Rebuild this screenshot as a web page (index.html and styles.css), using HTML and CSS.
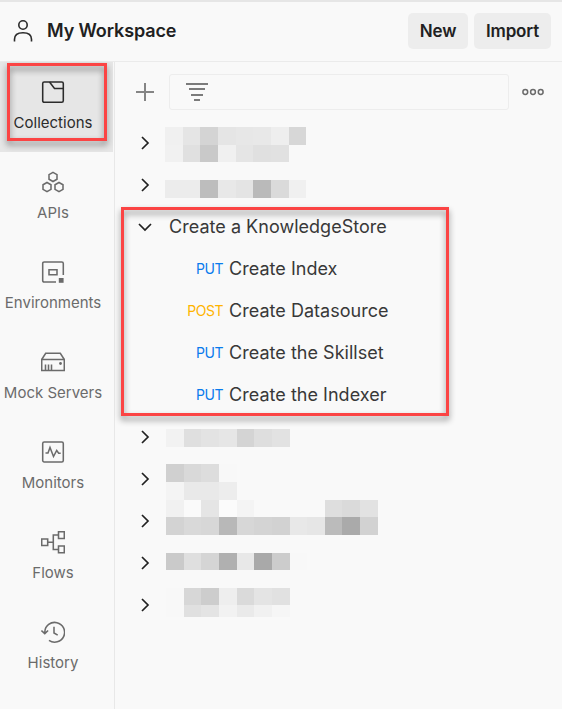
FILE: index.html
```html
<!DOCTYPE html>
<html lang="en">
<head>
<meta charset="utf-8">
<title>My Workspace</title>
<link rel="stylesheet" href="styles.css">
</head>
<body>
<div class="app">
  <header class="header">
    <svg class="user" width="20" height="24" viewBox="0 0 20 24"><circle cx="10" cy="6" r="4.2"/><path d="M1.500 22.500v-2.200c0-4 2.800-6.600 8.500-6.600s8.500 2.600 8.500 6.600v2.200"/></svg>
    <h1 class="title">My Workspace</h1>
    <button class="btn btn-new">New</button>
    <button class="btn btn-import">Import</button>
  </header>
  <div class="body">
    <nav class="sidebar">
      <a class="item active"><svg class="icon" viewBox="0 0 24 24"><rect x="1.700" y="2" width="20.600" height="20.300" rx="1.500"/><path d="M8.500 2l5 6.500h8.800"/></svg><span>Collections</span></a>
      <a class="item"><svg class="icon" viewBox="0 0 24 24"><path d="M12 2.300l4 2.300v4.600l-4 2.300-4-2.300V4.600zM6 12.500l4 2.300v4.600l-4 2.300-4-2.300v-4.600zM18 12.500l4 2.300v4.600l-4 2.300-4-2.300v-4.600z"/></svg><span>APIs</span></a>
      <a class="item"><svg class="icon" viewBox="0 0 24 24"><path d="M15 22H3.200Q1.700 22 1.700 20.500V3.500Q1.700 2 3.200 2h17.600q1.500 0 1.500 1.500V15"/><path d="M8 9.800h8v5H8z"/><path class="fill" d="M17.800 18h4.800v4.800h-4.800z"/></svg><span>Environments</span></a>
      <a class="item"><svg class="icon" viewBox="0 0 24 24"><path d="M.7 9.500h22.600v11H.7zM.7 9.500l4-6.200h14.600l4 6.200M4.500 14.500v6M7.500 14.500v6M10.500 14.500v6"/><circle class="fill" cx="19.500" cy="13.500" r="1.400"/></svg><span>Mock Servers</span></a>
      <a class="item"><svg class="icon" viewBox="0 0 24 24"><rect x="1.700" y="2" width="20.600" height="20" rx="1.500"/><path d="M4.500 13H7l2-5.500 3.500 9 3.200-6 2 2.700h2"/></svg><span>Monitors</span></a>
      <a class="item"><svg class="icon" viewBox="0 0 24 24"><path d="M.7 9h6v6.500h-6zM17.500 1.700h5.800v6.800h-5.800zM17.500 16h5.800v6.800h-5.800zM6.700 12.300h5.600M17.500 5h-5.200v14.500h5.200"/></svg><span>Flows</span></a>
      <a class="item"><svg class="icon" viewBox="0 0 24 24"><path d="M3.800 13.300V12A9.900 9.900 0 1 1 8 20.400M.4 10.500l3.400 3.100 3.300-3.100M13 6.800v6.200l3.700 2.200"/></svg><span>History</span></a>
      <div class="callout callout-nav"></div>
    </nav>
    <main class="main">
      <div class="toolbar">
        <svg class="plus" width="18" height="18" viewBox="0 0 18 18"><path d="M0 9h18M9 0v18"/></svg>
        <div class="filter"><svg width="22" height="20" viewBox="0 0 22 20"><path d="M0 2h22M3 7h16M5 13h12M8 18h6"/></svg></div>
        <svg class="more" width="22" height="8" viewBox="0 0 22 8"><circle cx="3.300" cy="4" r="2.400"/><circle cx="11" cy="4" r="2.400"/><circle cx="18.700" cy="4" r="2.400"/></svg>
      </div>
      <div class="tree" id="tree"></div>
      <div class="callout callout-tree"></div>
    </main>
  </div>
</div>
<script src="tree.js"></script>
</body>
</html>
```
FILE: styles.css
```css
* { box-sizing: border-box; }
body { margin: 0; background: #f9f9f9; color: #212121; font-family: Inter, "Liberation Sans", sans-serif; }
svg { display: block; flex: none; fill: none; }
.app { width: 562px; height: 709px; display: flex; flex-direction: column; overflow: hidden; }
.header { height: 62px; display: flex; align-items: center; padding: 0 11px 1px 13px; border-top: 2px solid #e6e6e6; border-bottom: 1px solid #ebebeb; }
.user { stroke: #2b2b2b; stroke-width: 1.6; }
.title { margin: 0 auto 0 14px; font-size: 18px; font-weight: 600; line-height: 24px; letter-spacing: -.12px; white-space: nowrap; }
.btn { height: 36px; border: 0; border-radius: 5px; background: #ededed; color: #212121; font: 600 17px/24px Inter, sans-serif; letter-spacing: -.15px; padding: 0; }
.btn-new { width: 60px; margin-right: 6px; }
.btn-import { width: 77px; }
.body { flex: 1; display: flex; }
.sidebar { position: relative; width: 115px; border-right: 1px solid #e8e8e8; }
.item { height: 90px; width: 113px; padding: 18px 0 0; display: flex; flex-direction: column; align-items: center; color: #6b6b6b; font-size: 15px; line-height: 20px; white-space: nowrap; }
.item span { margin: 9px 7px 0 0; }
.icon { width: 24px; height: 24px; margin-right: 7px; stroke: currentColor; stroke-width: 1.55; }
.icon .fill { fill: currentColor; stroke: none; }
.active { background: #e6e6e6; color: #2b2b2b; }
.main { position: relative; flex: 1; }
.toolbar { height: 60px; display: flex; align-items: center; padding-left: 21px; }
.plus { stroke: #858585; stroke-width: 2; }
.filter { width: 340px; height: 36px; margin: 0 13px 0 15px; padding-left: 16px; border: 1px solid #ededed; border-radius: 3px; display: flex; align-items: center; }
.filter svg { stroke: #7b7b7b; stroke-width: 1.8; }
.more { stroke: #6b6b6b; stroke-width: 1.5; }
.row { height: 42px; display: flex; align-items: center; padding-left: 23px; color: #383838; font-size: 18px; line-height: 24px; letter-spacing: .03px; white-space: nowrap; }
.chevron { width: 14px; height: 14px; stroke: #212121; stroke-width: 1.7; }
.mosaic { margin-left: 13px; }
.label { margin-left: 17px; }
.request { padding-left: 0; }
.method { width: 108px; text-align: right; font-size: 14px; margin-right: 6px; letter-spacing: -.5px; }
.put { color: #097bed; }
.post { color: #ffb400; }
.callout { position: absolute; border: 3px solid #fb4444; filter: drop-shadow(0 4px 3px rgba(0, 0, 0, .45)); pointer-events: none; }
.callout-nav { left: 7px; top: 1px; width: 100px; height: 78px; }
.callout-tree { left: 6px; top: 145px; width: 328px; height: 209px; }
```
FILE: tree.js
```js
// Redacted names: each band is [top, height, shades per column].
const rows = [
  { x: -1, bands: [[5, 18, 'f0 e5 d4 e5 e7 e8 ee d7'], [23, 17, 'f1 e0 c9 f0 e5 e0 e1']] },
  { x: -1, bands: [[16, 18, 'ec ec bd e8 e4 ba da f0']] },
  { folder: 'Create a KnowledgeStore' },
  { method: 'PUT', name: 'Create Index' },
  { method: 'POST', name: 'Create Datasource' },
  { method: 'PUT', name: 'Create the Skillset' },
  { method: 'PUT', name: 'Create the Indexer' },
  { x: 0, bands: [[13, 18, 'f2 df e3 e6 d4 de e2']] },
  { x: 0, bands: [[6, 18, 'd0 d9 dd f8'], [24, 18, 'f4 e9 e9 ed']] },
  { x: 0, bands: [[0, 17, 'f1 fa e5 fb f4 - - - - de da e2'], [17, 18, 'd3 d9 d7 b8 d7 d4 d2 e8 e6 bb aa d2']] },
  { x: 0, bands: [[11, 17, 'ca df d5 b0 e8 a9 cc f8']] },
  { x: 0, bands: [[4, 17, 'f8 d7 cd ee da e4 e1'], [21, 12, 'f8 e0 e4 f2 ea f1 f6']] },
];
const edges = [1, 19, 36, 54, 72, 89, 107, 125, 142, 160, 177, 195, 213];

function mosaic(row) {
  const cells = row.bands.flatMap(([y, h, shades]) => shades.split(' ').map((s, i) =>
    s === '-' ? '' : `<rect x="${edges[i] + row.x}" y="${y}" width="${edges[i + 1] - edges[i]}" height="${h}" fill="#${s}${s}${s}"/>`));
  return `<svg class="mosaic" width="216" height="42" shape-rendering="crispEdges">${cells.join('')}</svg>`;
}

document.getElementById('tree').innerHTML = rows.map((row) => {
  if (row.method) {
    return `<div class="row request"><span class="method ${row.method.toLowerCase()}">${row.method}</span><span>${row.name}</span></div>`;
  }
  const d = row.folder ? 'M1 4l6 6 6-6' : 'M4 1l6 6-6 6';
  const content = row.folder ? `<span class="label">${row.folder}</span>` : mosaic(row);
  return `<div class="row"><svg class="chevron" viewBox="0 0 14 14"><path d="${d}"/></svg>${content}</div>`;
}).join('');
```
